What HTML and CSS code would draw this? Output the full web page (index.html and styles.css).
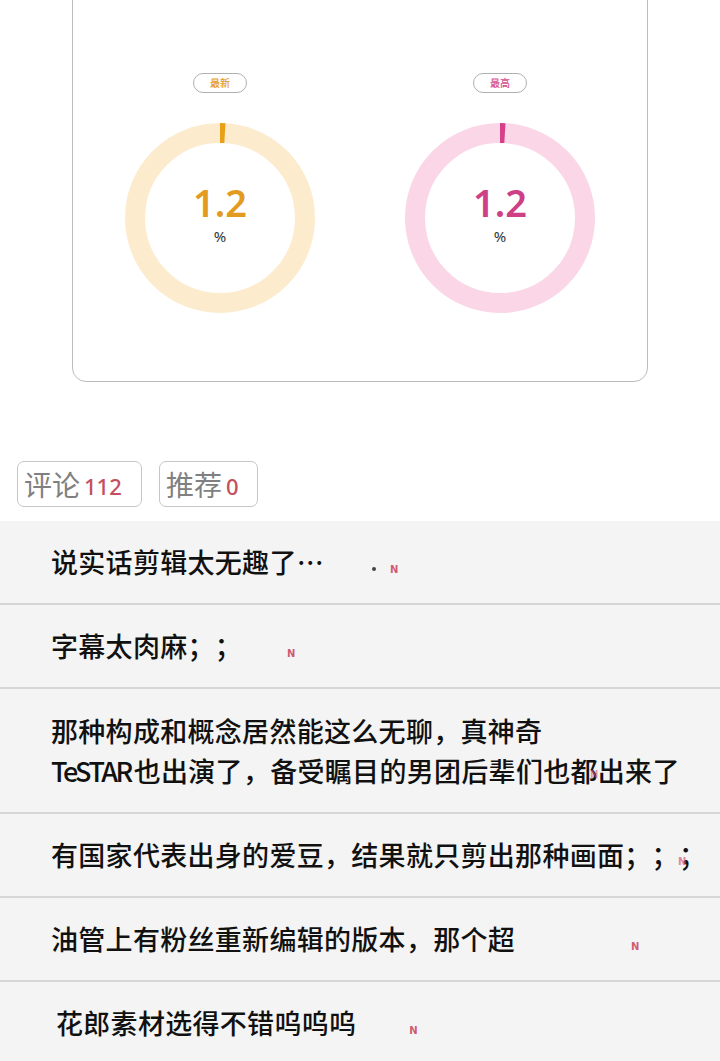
FILE: index.html
```html
<!DOCTYPE html>
<html lang="zh">
<head>
<meta charset="utf-8">
<link rel="stylesheet" href="styles.css">
</head>
<body>
<div class="card">
  <div class="stats">
    <div class="stat stat-new">
      <div class="pill">最新</div>
      <div class="ring">
        <svg class="ring-svg" width="190" height="190" viewBox="0 0 190 190">
          <circle class="track" cx="95" cy="95" r="85"/>
          <circle class="bar" cx="95" cy="95" r="85" transform="rotate(-90 95 95)"/>
        </svg>
        <div class="ring-label">
          <span class="value">1.2</span>
          <span class="unit">%</span>
        </div>
      </div>
    </div>
    <div class="stat stat-high">
      <div class="pill">最高</div>
      <div class="ring">
        <svg class="ring-svg" width="190" height="190" viewBox="0 0 190 190">
          <circle class="track" cx="95" cy="95" r="85"/>
          <circle class="bar" cx="95" cy="95" r="85" transform="rotate(-90 95 95)"/>
        </svg>
        <div class="ring-label">
          <span class="value">1.2</span>
          <span class="unit">%</span>
        </div>
      </div>
    </div>
  </div>
</div>

<div class="tabs">
  <div class="tab tab-comment"><span class="tab-name">评论</span><span class="tab-count">112</span></div>
  <div class="tab tab-rec"><span class="tab-name">推荐</span><span class="tab-count">0</span></div>
</div>

<ul class="comments">
  <li class="row row-1"><span class="txt">说实话剪辑太无趣了…</span><span class="dot"></span><span class="n n-1">N</span></li>
  <li class="row row-2"><span class="txt">字幕太肉麻；；</span><span class="n n-2">N</span></li>
  <li class="row row-3"><span class="txt">那种构成和概念居然能这么无聊，真神奇<br><span class="latin">TeSTAR</span>也出演了，备受瞩目的男团后辈们也都出来了</span><span class="n n-3">N</span></li>
  <li class="row row-4"><span class="txt">有国家代表出身的爱豆，结果就只剪出那种画面；；；</span><span class="n n-4">N</span></li>
  <li class="row row-5"><span class="txt">油管上有粉丝重新编辑的版本，那个超</span><span class="n n-5">N</span></li>
  <li class="row row-6"><span class="txt">花郎素材选得不错呜呜呜</span><span class="n n-6">N</span></li>
</ul>
</body>
</html>
```

FILE: styles.css
```css
* { box-sizing: border-box; }
html, body { margin: 0; padding: 0; background: #fff; }
body {
  width: 720px;
  height: 1061px;
  overflow: hidden;
  font-family: "Noto Sans CJK SC", "Noto Sans", sans-serif;
  color: #111;
  text-spacing-trim: space-all;
}

.card {
  margin: -20px 72px 0;
  height: 402px;
  border: 1.5px solid #bcbcbc;
  border-radius: 14px;
  padding-top: 92px;
}
.stats {
  display: grid;
  grid-template-columns: 1fr 1fr;
  padding: 0 7px;
}
.stat {
  display: flex;
  flex-direction: column;
  align-items: center;
}
.pill {
  width: 54px;
  height: 20px;
  border: 1px solid #b0b0b0;
  border-radius: 10px;
  font-size: 10px;
  font-weight: 500;
  line-height: 18px;
  text-align: center;
  margin-bottom: 30px;
}
.stat-new .pill { color: #e39a22; }
.stat-high .pill { color: #d54c8a; }

.ring {
  display: grid;
  width: 190px;
  height: 190px;
}
.ring-svg, .ring-label { grid-area: 1 / 1; }
.track { fill: none; stroke-width: 20; }
.bar { fill: none; stroke-width: 20; stroke-dasharray: 5 600; }
.stat-new .track { stroke: #fcebcd; }
.stat-new .bar { stroke: #e8a018; }
.stat-high .track { stroke: #fad6e6; }
.stat-high .bar { stroke: #d6408a; }

.ring-label {
  display: flex;
  flex-direction: column;
  align-items: center;
  justify-content: center;
  padding-bottom: 8px;
}
.value {
  font-family: "Noto Sans", "Open Sans", sans-serif;
  font-size: 38px;
  font-weight: 600;
  line-height: 34px;
}
.stat-new .value { color: #e29b1e; }
.stat-high .value { color: #cf3f86; }
.unit {
  font-family: "Noto Sans", sans-serif;
  font-size: 15px;
  color: #333;
  line-height: 16px;
  margin-top: 9px;
}

.tabs {
  display: flex;
  gap: 17px;
  padding-left: 17px;
  margin-top: 79px;
}
.tab {
  height: 46px;
  border: 1.5px solid #c6c6c6;
  border-radius: 7px;
  display: flex;
  align-items: center;
  padding-left: 6px;
}
.tab-comment { width: 125px; }
.tab-rec { width: 99px; }
.tab-name {
  font-size: 28px;
  color: #808080;
  line-height: 1;
}
.tab-count {
  font-family: "Noto Sans", sans-serif;
  font-size: 22px;
  font-weight: 500;
  color: #c4505e;
  margin-left: 4px;
  line-height: 1;
  padding-top: 3px;
}

.comments {
  list-style: none;
  margin: 14px 0 0;
  padding: 0;
  background: #f4f4f4;
}
.row {
  display: flex;
  align-items: center;
  height: 84px;
  border-bottom: 2px solid #d6d6d6;
  padding-left: 51px;
  font-size: 27px;
  font-weight: 500;
  letter-spacing: 0.3px;
  position: relative;
}
.row-3 { height: 125px; }
.row-6 { padding-left: 56px; border-bottom: none; height: 90px; padding-bottom: 8px; }
.txt { line-height: 40px; white-space: nowrap; }
.latin { letter-spacing: -2.5px; margin-right: 3px; }

.dot {
  width: 4px;
  height: 4px;
  border-radius: 50%;
  background: #444;
  margin-left: 48px;
  position: relative;
  top: 7px;
}
.n {
  font-family: "DejaVu Sans", sans-serif;
  font-size: 10px;
  font-weight: bold;
  color: #d05a72;
  letter-spacing: 0;
  position: relative;
  top: 7px;
}
.n-1 { margin-left: 14px; }
.n-2 { margin-left: 45px; }
.n-3 { position: absolute; left: 590px; top: 80px; opacity: 0.6; }
.n-4 { position: absolute; left: 678px; top: 42px; opacity: 0.7; }
.n-5 { margin-left: 116px; }
.n-6 { margin-left: 53px; }
```
